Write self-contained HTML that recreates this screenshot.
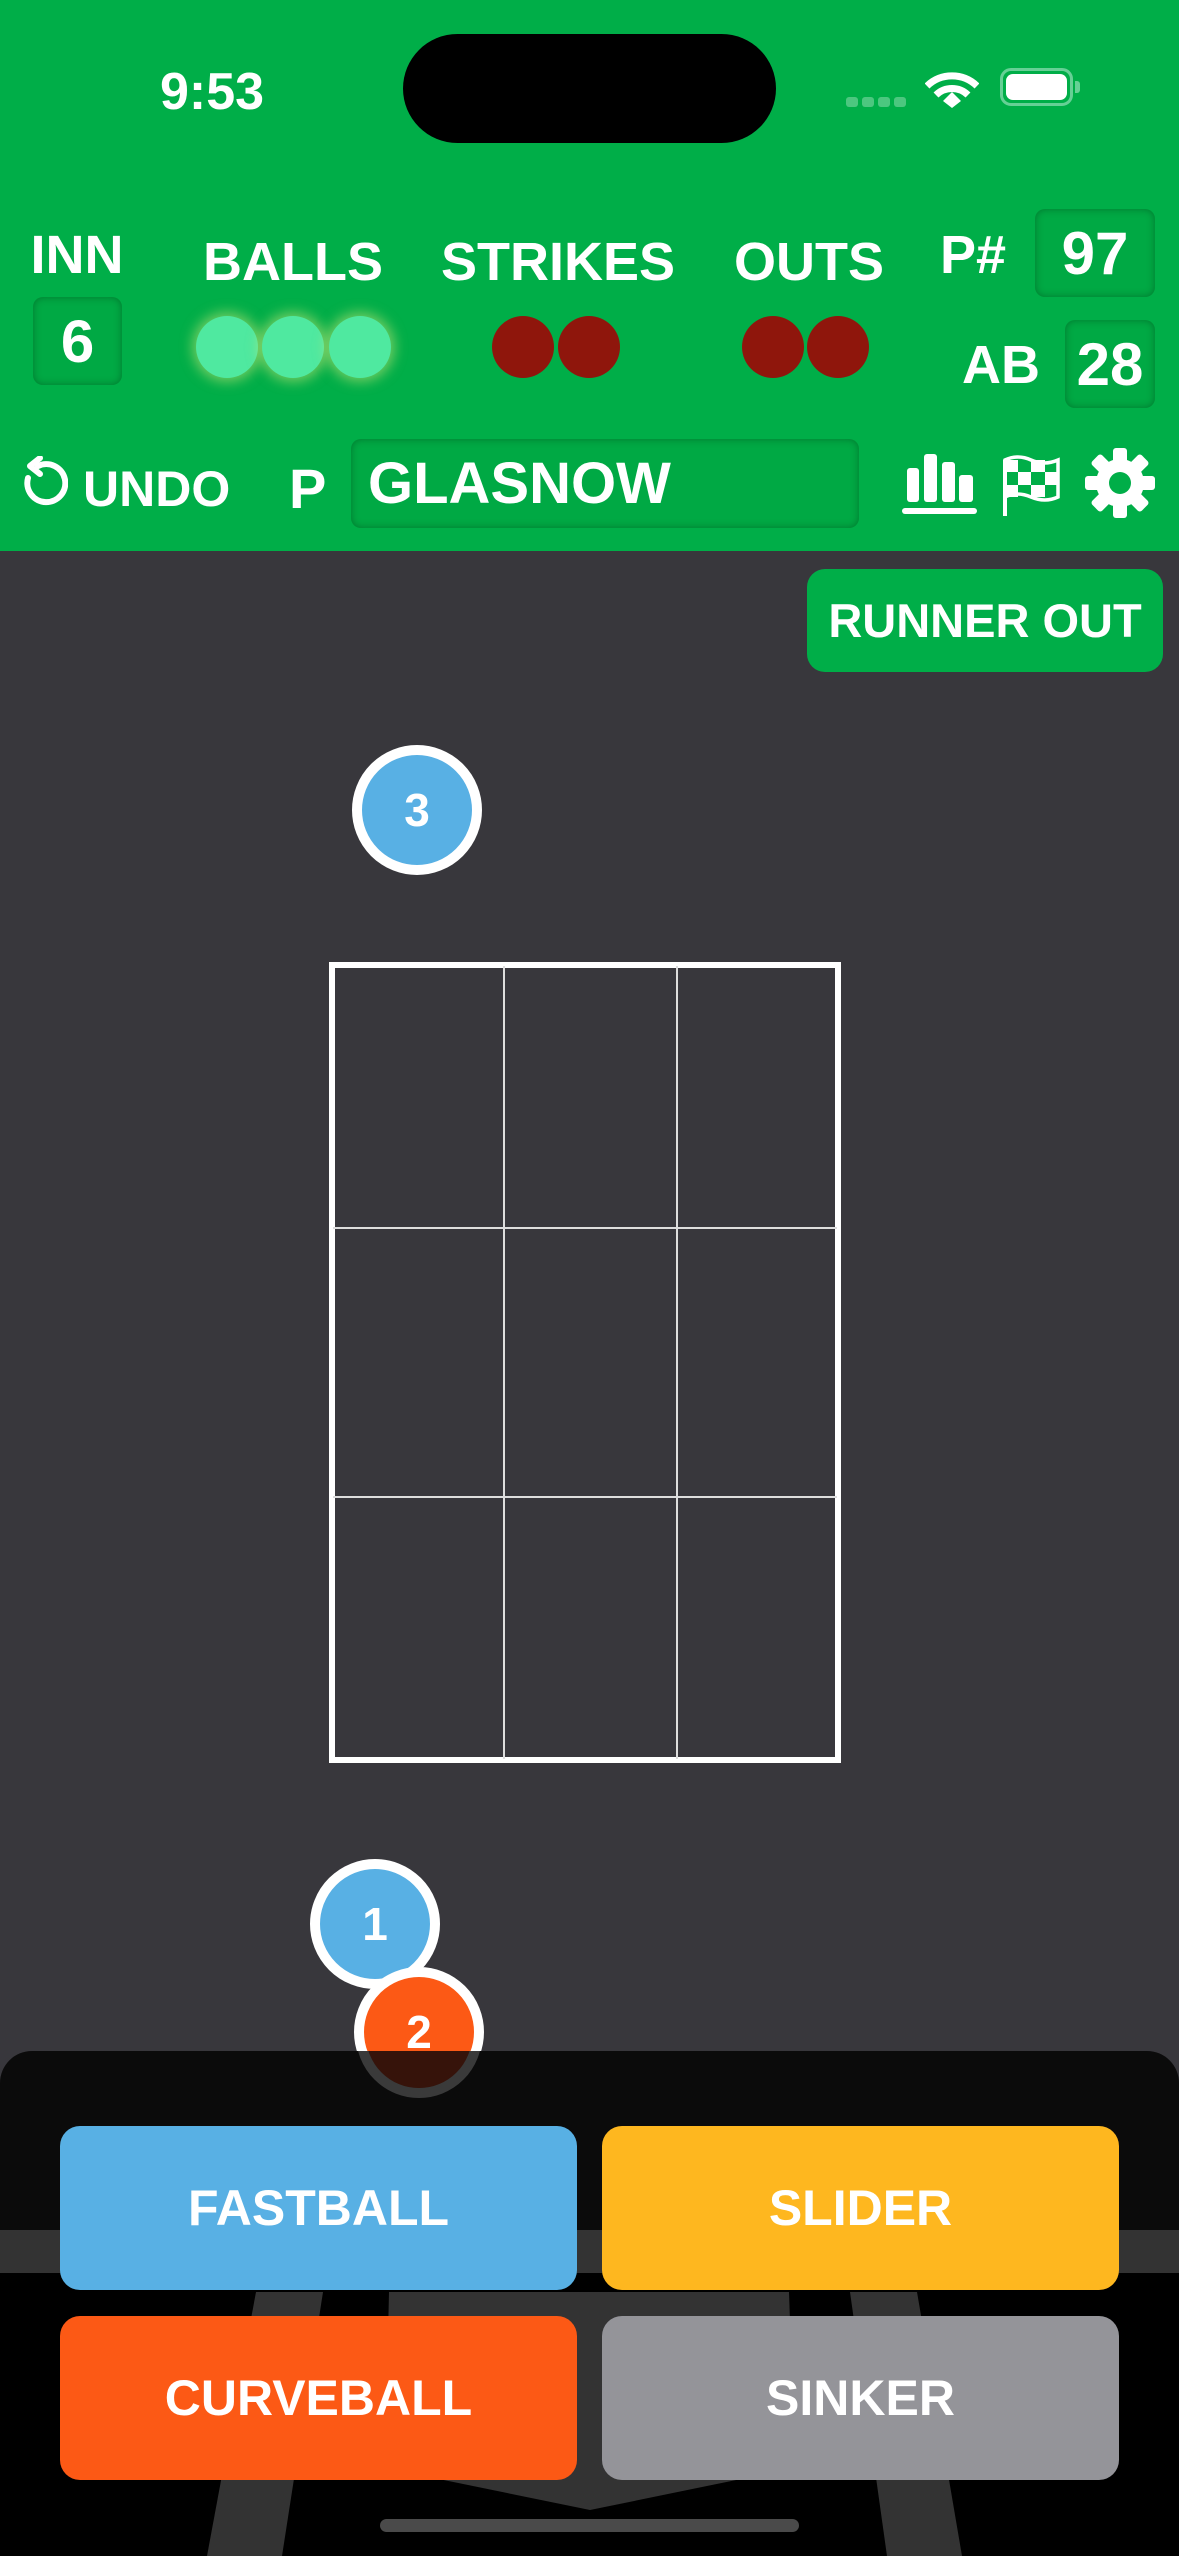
<!DOCTYPE html>
<html><head><meta charset="utf-8">
<style>
*{margin:0;padding:0;box-sizing:border-box}
body{width:1179px;height:2556px;overflow:hidden;background:#38373c;font-family:"Liberation Sans",sans-serif;position:relative;color:#fff}
.abs{position:absolute}
.hdr{left:0;top:0;width:1179px;height:551px;background:#00ae48}
.lbl{position:absolute;font-size:54px;font-weight:bold;line-height:1;white-space:nowrap;transform:translateX(-50%)}
.box{position:absolute;background:#00a944;border-radius:10px;box-shadow:inset 0 0 8px rgba(0,60,20,.45);font-weight:bold;display:flex;align-items:center;justify-content:center;font-size:60px}
.dot{position:absolute;width:62px;height:62px;border-radius:50%;transform:translate(-50%,-50%)}
.g{background:#4fe9a0;box-shadow:0 0 12px 4px rgba(200,230,120,.55)}
.r{background:#8f160c}
.ball{position:absolute;width:130px;height:130px;border-radius:50%;border:10px solid #fff;transform:translate(-50%,-50%);display:flex;align-items:center;justify-content:center;font-size:46px;font-weight:bold}
.btn{position:absolute;width:517px;height:164px;border-radius:20px;display:flex;align-items:center;justify-content:center;font-size:50px;font-weight:bold}
</style></head><body>
<div class="abs hdr"></div>
<div class="abs" style="left:160px;top:62px;font-size:52px;font-weight:bold">9:53</div>
<div class="abs" style="left:403px;top:34px;width:373px;height:109px;border-radius:55px;background:#000"></div>
<div class="abs" style="left:846px;top:97px;width:12px;height:10px;border-radius:3px;background:#4cc77f"></div>
<div class="abs" style="left:862px;top:97px;width:12px;height:10px;border-radius:3px;background:#4cc77f"></div>
<div class="abs" style="left:878px;top:97px;width:12px;height:10px;border-radius:3px;background:#4cc77f"></div>
<div class="abs" style="left:894px;top:97px;width:12px;height:10px;border-radius:3px;background:#4cc77f"></div>
<svg class="abs" style="left:925px;top:68px" width="54" height="40" viewBox="0 0 54 40"><path d="M2 18 A36 36 0 0 1 52 18" stroke="#fff" stroke-width="7" fill="none"/><path d="M11 27 A23 23 0 0 1 43 27" stroke="#fff" stroke-width="7" fill="none"/><path d="M18 33 L27 24 L36 33 L27 40Z" fill="#fff"/></svg>
<div class="abs" style="left:1000px;top:68px;width:73px;height:38px;border-radius:11px;border:3px solid #66d095"></div>
<div class="abs" style="left:1006px;top:74px;width:61px;height:26px;border-radius:7px;background:#fff"></div>
<div class="abs" style="left:1075px;top:81px;width:5px;height:12px;border-radius:0 3px 3px 0;background:#66d095"></div>

<div class="lbl" style="left:77px;top:228px">INN</div>
<div class="box" style="left:33px;top:297px;width:89px;height:88px">6</div>
<div class="lbl" style="left:293px;top:235px">BALLS</div>
<div class="lbl" style="left:558px;top:235px">STRIKES</div>
<div class="lbl" style="left:809px;top:235px">OUTS</div>
<div class="dot g" style="left:227px;top:347px"></div>
<div class="dot g" style="left:293px;top:347px"></div>
<div class="dot g" style="left:360px;top:347px"></div>
<div class="dot r" style="left:523px;top:347px"></div>
<div class="dot r" style="left:589px;top:347px"></div>
<div class="dot r" style="left:773px;top:347px"></div>
<div class="dot r" style="left:838px;top:347px"></div>
<div class="lbl" style="left:973px;top:228px">P#</div>
<div class="box" style="left:1035px;top:209px;width:120px;height:88px">97</div>
<div class="lbl" style="left:1001px;top:338px">AB</div>
<div class="box" style="left:1065px;top:320px;width:90px;height:88px">28</div>

<svg class="abs" style="left:20px;top:456px" width="48" height="56" viewBox="0 0 48 56"><path d="M18 10 A19 19 0 1 1 8 22" stroke="#fff" stroke-width="6" fill="none" stroke-linecap="round"/><path d="M20 2 L10 10 L20 18" stroke="#fff" stroke-width="6" fill="none" stroke-linecap="round" stroke-linejoin="round"/></svg>
<div class="abs" style="left:83px;top:460px;font-size:50px;font-weight:bold">UNDO</div>
<div class="abs" style="left:289px;top:456px;font-size:56px;font-weight:bold">P</div>
<div class="box" style="left:351px;top:439px;width:508px;height:89px;justify-content:flex-start;padding-left:17px;font-size:58px">GLASNOW</div>
<svg class="abs" style="left:900px;top:450px" width="80" height="68"><rect x="7" y="18" width="12" height="34" rx="3" fill="#fff"/><rect x="24" y="4" width="13" height="48" rx="3" fill="#fff"/><rect x="42" y="12" width="13" height="40" rx="3" fill="#fff"/><rect x="59" y="25" width="14" height="27" rx="3" fill="#fff"/><rect x="2" y="58" width="75" height="6" rx="3" fill="#fff"/></svg>
<svg class="abs" style="left:1000px;top:452px" width="62" height="66" viewBox="0 0 62 66"><path d="M5 64 V8" stroke="#fff" stroke-width="4"/><path d="M5 8 Q18 2 31 8 T58 8 V45 Q45 51 31 45 T5 45Z" fill="none" stroke="#fff" stroke-width="3.5"/><path d="M5 8 H18 V20 H5Z M31 8 H45 V20 H31Z M18 20 H31 V33 H18Z M45 20 H58 V33 H45Z M5 33 H18 V45 H5Z M31 33 H45 V45 H31Z" fill="#fff"/></svg>
<svg class="abs" style="left:1084px;top:447px" width="72" height="72" viewBox="-36 -36 72 72"><g fill="#fff"><circle r="24"/><g id="t"><rect x="-7" y="-35" width="14" height="16" rx="3"/></g><use href="#t" transform="rotate(45)"/><use href="#t" transform="rotate(90)"/><use href="#t" transform="rotate(135)"/><use href="#t" transform="rotate(180)"/><use href="#t" transform="rotate(225)"/><use href="#t" transform="rotate(270)"/><use href="#t" transform="rotate(315)"/></g><circle r="11" fill="#00ae48"/></svg>

<div class="abs" style="left:807px;top:569px;width:356px;height:103px;border-radius:18px;background:#00ae48;display:flex;align-items:center;justify-content:center;font-size:47px;font-weight:bold">RUNNER OUT</div>

<div class="ball" style="left:417px;top:810px;background:#58b0e4">3</div>

<div class="abs" style="left:329px;top:962px;width:512px;height:801px;border:6px solid #fff"></div>
<div class="abs" style="left:503px;top:966px;width:2px;height:793px;background:#ddd"></div>
<div class="abs" style="left:676px;top:966px;width:2px;height:793px;background:#ddd"></div>
<div class="abs" style="left:333px;top:1227px;width:504px;height:2px;background:#ddd"></div>
<div class="abs" style="left:333px;top:1496px;width:504px;height:2px;background:#ddd"></div>

<div class="ball" style="left:375px;top:1924px;background:#58b0e4">1</div>
<div class="ball" style="left:419px;top:2032px;background:#fc5915">2</div>

<div class="abs" style="left:0;top:2230px;width:1179px;height:326px;background:#000"></div>
<div class="abs" style="left:0;top:2230px;width:1179px;height:43px;background:#333"></div>
<svg class="abs" style="left:0;top:2273px" width="1179" height="283"><polygon points="256,19 323,19 282,283 207,283" fill="#333"/><polygon points="850,19 917,19 962,283 887,283" fill="#333"/><polygon points="389,19 789,19 795,195 590,237 385,195" fill="#333"/></svg>
<div class="abs" style="left:0;top:2051px;width:1179px;height:179px;background:#0b0b0b;border-radius:32px 32px 0 0"></div>
<div class="abs" style="left:356px;top:2051px;width:126px;height:47px;overflow:hidden"><div style="width:126px;height:126px;margin-top:-79px;border-radius:50%;background:#333;border:10px solid #3a3a3a;display:flex;align-items:center;justify-content:center"><div style="width:106px;height:106px;border-radius:50%;background:#36130a"></div></div></div>

<div class="btn" style="left:60px;top:2126px;background:#58b0e4">FASTBALL</div>
<div class="btn" style="left:602px;top:2126px;background:#feb71f">SLIDER</div>
<div class="btn" style="left:60px;top:2316px;background:#fc5915">CURVEBALL</div>
<div class="btn" style="left:602px;top:2316px;background:#949499">SINKER</div>
<div class="abs" style="left:380px;top:2519px;width:419px;height:13px;border-radius:7px;background:#4a4a4a"></div>
</body></html>
